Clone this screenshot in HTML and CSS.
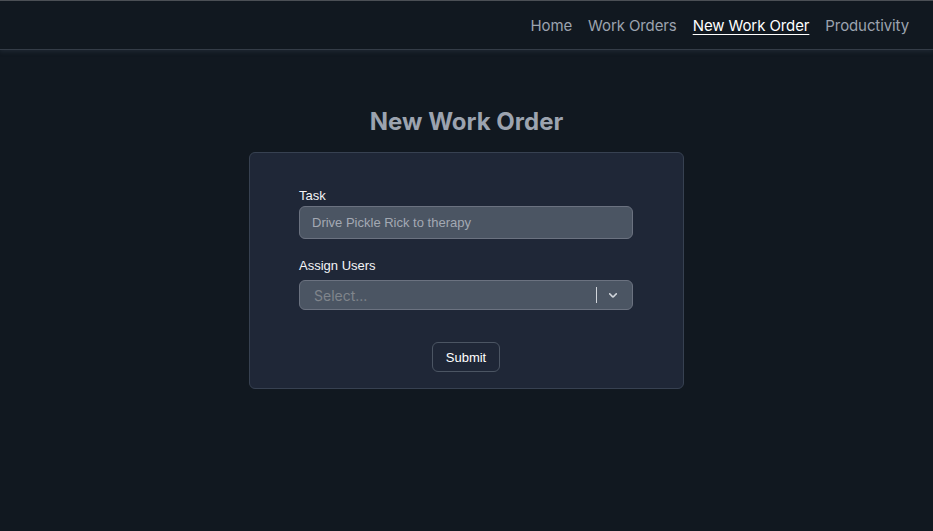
FILE: index.html
```html
<!DOCTYPE html>
<html>
<head>
<meta charset="utf-8">
<link rel="stylesheet" href="styles.css">
</head>
<body>
<header class="topbar">
  <nav class="nav">
    <a class="nav-link" href="#">Home</a>
    <a class="nav-link" href="#">Work Orders</a>
    <a class="nav-link active" href="#">New Work Order</a>
    <a class="nav-link" href="#">Productivity</a>
  </nav>
</header>
<main class="main">
  <h1 class="title">New Work Order</h1>
  <form class="card">
    <div class="field">
      <label class="label">Task</label>
      <input class="input" type="text" placeholder="Drive Pickle Rick to therapy">
    </div>
    <div class="field">
      <label class="label">Assign Users</label>
      <div class="select">
        <div class="select-value">Select...</div>
        <div class="select-indicators">
          <span class="separator"></span>
          <span class="chevron">
            <svg width="20" height="20" viewBox="0 0 20 20"><path d="M4.516 7.548c0.436-0.446 1.043-0.481 1.576 0l3.908 3.747 3.908-3.747c0.533-0.481 1.141-0.446 1.574 0 0.436 0.445 0.408 1.197 0 1.615-0.406 0.418-4.695 4.502-4.695 4.502-0.217 0.223-0.502 0.335-0.787 0.335s-0.57-0.112-0.789-0.335c0 0-4.287-4.084-4.695-4.502s-0.436-1.170 0-1.615z" fill="currentColor"/></svg>
          </span>
        </div>
      </div>
    </div>
    <div class="actions">
      <button class="button" type="button">Submit</button>
    </div>
  </form>
</main>
</body>
</html>
```
FILE: styles.css
```css
* { box-sizing: border-box; }
html, body { margin: 0; padding: 0; }
body {
  background: #111820;
  font-family: Inter, "Liberation Sans", sans-serif;
  color: #fff;
  min-height: 531px;
  border-top: 1px solid #4b4f55;
}
.topbar {
  height: 49px;
  border-bottom: 1px solid #343c47;
  box-shadow: 0 2px 4px rgba(55, 65, 81, 0.35);
  display: flex;
  justify-content: flex-end;
  align-items: center;
  padding: 2px 24px 0 0;
}
.nav {
  display: flex;
  gap: 16px;
  align-items: center;
}
.nav-link {
  color: #9ca3af;
  font-size: 15px;
  letter-spacing: -0.1px;
  text-decoration: none;
  line-height: 24px;
}
.nav-link.active {
  color: #fff;
  text-decoration: underline;
  text-underline-offset: 3px;
}
.main {
  display: flex;
  flex-direction: column;
  align-items: center;
  padding-top: 56px;
}
.title {
  margin: 0 0 14px;
  font-size: 24px;
  line-height: 32px;
  font-weight: 700;
  color: #9ca3af;
}
.card {
  width: 435px;
  background: #1f2737;
  border: 1px solid #374151;
  border-radius: 6px;
  padding: 34px 50px 16px 49px;
  display: flex;
  flex-direction: column;
}
.field {
  display: flex;
  flex-direction: column;
  margin-bottom: 18px;
}
.label {
  font-family: "Liberation Sans", Arial, sans-serif;
  font-size: 13px;
  line-height: 18px;
  color: #f3f4f6;
  margin-bottom: 1px;
}
.input {
  height: 33px;
  background: #4b5563;
  border: 1px solid #6b7280;
  border-radius: 6px;
  padding: 0 12px;
  font-family: "Liberation Sans", Arial, sans-serif;
  font-size: 13px;
  color: #fff;
}
.input::placeholder { color: #a3a9b3; }
.select {
  margin-top: 4px;
  height: 30px;
  background: #4b5563;
  border: 1px solid #6b7280;
  border-radius: 6px;
  display: flex;
  align-items: center;
}
.select-value {
  flex: 1;
  padding-left: 14px;
  font-size: 14px;
  color: #80858c;
}
.select-indicators {
  display: flex;
  align-items: center;
  align-self: stretch;
}
.separator {
  width: 1px;
  height: 16px;
  background: #d1d5db;
}
.chevron {
  display: flex;
  padding: 0 12px 0 9px;
  color: #d1d5db;
}
.chevron svg { width: 14px; height: 14px; }
.actions {
  display: flex;
  justify-content: center;
  padding-top: 14px;
}
.button {
  height: 30px;
  padding: 0 13px;
  background: transparent;
  border: 1px solid #4b5563;
  border-radius: 6px;
  color: #fff;
  font-family: "Liberation Sans", Arial, sans-serif;
  font-size: 13px;
}
```
